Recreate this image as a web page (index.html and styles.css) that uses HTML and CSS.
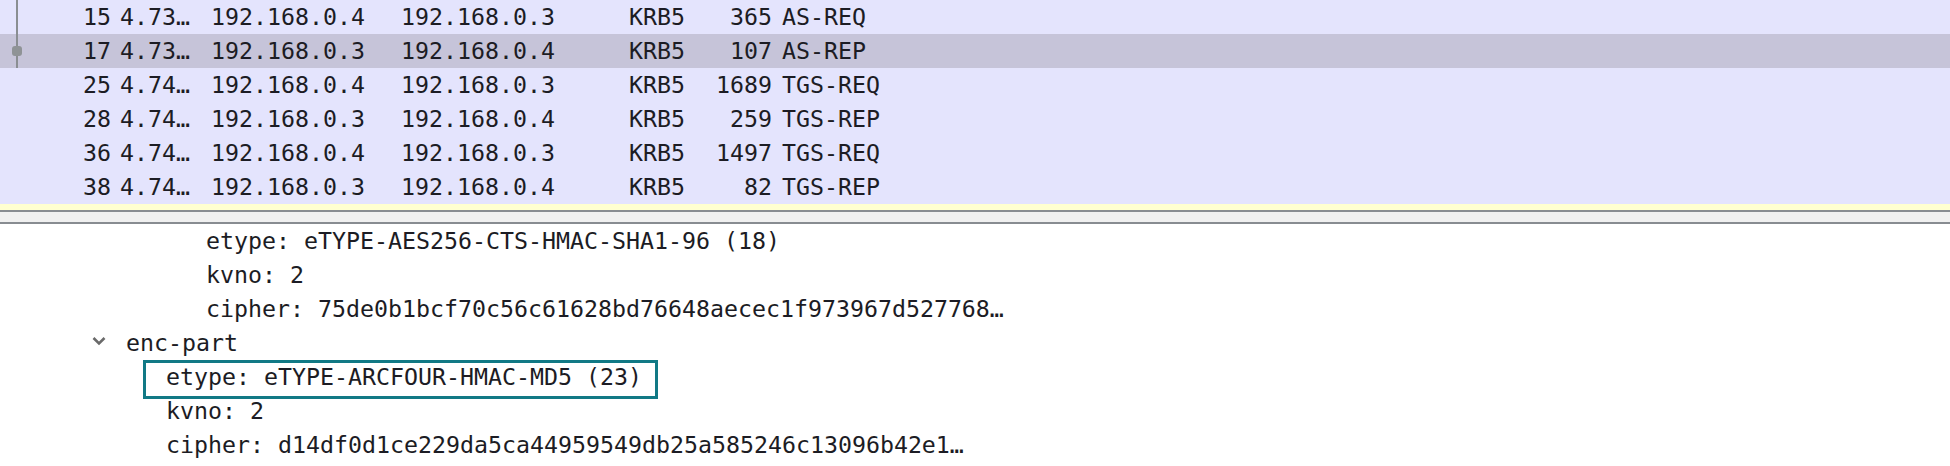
FILE: index.html
```html
<!DOCTYPE html>
<html>
<head>
<meta charset="utf-8">
<link rel="stylesheet" href="styles.css">
</head>
<body>
<div class="app">
  <div class="packet-list">
    <svg class="related" width="24" height="68" viewBox="0 0 24 68"><rect x="16" y="0" width="2" height="68" fill="#8a8e92"/><rect x="12" y="46" width="10" height="10" rx="3" fill="#8f9396"/></svg>
    <div class="row"><span class="c-no">15</span><span class="c-time">4.73…</span><span class="c-src">192.168.0.4</span><span class="c-dst">192.168.0.3</span><span class="c-proto">KRB5</span><span class="c-len">365</span><span class="c-info">AS-REQ</span></div>
    <div class="row selected"><span class="c-no">17</span><span class="c-time">4.73…</span><span class="c-src">192.168.0.3</span><span class="c-dst">192.168.0.4</span><span class="c-proto">KRB5</span><span class="c-len">107</span><span class="c-info">AS-REP</span></div>
    <div class="row"><span class="c-no">25</span><span class="c-time">4.74…</span><span class="c-src">192.168.0.4</span><span class="c-dst">192.168.0.3</span><span class="c-proto">KRB5</span><span class="c-len">1689</span><span class="c-info">TGS-REQ</span></div>
    <div class="row"><span class="c-no">28</span><span class="c-time">4.74…</span><span class="c-src">192.168.0.3</span><span class="c-dst">192.168.0.4</span><span class="c-proto">KRB5</span><span class="c-len">259</span><span class="c-info">TGS-REP</span></div>
    <div class="row"><span class="c-no">36</span><span class="c-time">4.74…</span><span class="c-src">192.168.0.4</span><span class="c-dst">192.168.0.3</span><span class="c-proto">KRB5</span><span class="c-len">1497</span><span class="c-info">TGS-REQ</span></div>
    <div class="row"><span class="c-no">38</span><span class="c-time">4.74…</span><span class="c-src">192.168.0.3</span><span class="c-dst">192.168.0.4</span><span class="c-proto">KRB5</span><span class="c-len">82</span><span class="c-info">TGS-REP</span></div>
    <div class="row-partial"></div>
  </div>
  <div class="splitter"></div>
  <div class="details">
    <div class="line lvl3">etype: eTYPE-AES256-CTS-HMAC-SHA1-96 (18)</div>
    <div class="line lvl3">kvno: 2</div>
    <div class="line lvl3">cipher: 75de0b1bcf70c56c61628bd76648aecec1f973967d527768…</div>
    <div class="line lvl1"><svg class="chev" width="16" height="12" viewBox="0 0 16 12"><path d="M2.5 3 L8 8.5 L13.5 3" fill="none" stroke="#6a6a6a" stroke-width="2.6"/></svg><span>enc-part</span></div>
    <div class="line lvl2 boxed"><span>etype: eTYPE-ARCFOUR-HMAC-MD5 (23)</span></div>
    <div class="line lvl2">kvno: 2</div>
    <div class="line lvl2">cipher: d14df0d1ce229da5ca44959549db25a585246c13096b42e1…</div>
  </div>
</div>
</body>
</html>
```
FILE: styles.css
```css
html, body {
  margin: 0;
  padding: 0;
  background: #ffffff;
}

.app {
  width: 1950px;
  font-family: "DejaVu Sans Mono", "Liberation Mono", monospace;
  font-size: 23.25px;
  color: #1c1c24;
}

.packet-list {
  position: relative;
  background: #e4e4fd;
}

.related {
  position: absolute;
  left: 0;
  top: 0;
}

.row {
  display: grid;
  grid-template-columns: 111px 100px 190px 228px 73px 70px 1fr;
  height: 34px;
  line-height: 34px;
  white-space: pre;
}

.row.selected {
  background: #c6c4d9;
}

.c-no {
  text-align: right;
}

.c-time {
  padding-left: 9px;
}

.c-len {
  text-align: right;
}

.c-info {
  padding-left: 10px;
}

.row-partial {
  height: 6px;
  background: #ffffd0;
}

.splitter {
  height: 10px;
  background: #f0f0f0;
  border-top: 2px solid #888c91;
  border-bottom: 2px solid #888c91;
}

.details {
  background: #ffffff;
}

.line {
  position: relative;
  height: 34px;
  line-height: 34px;
  white-space: pre;
  display: flex;
  align-items: center;
}

.lvl3 {
  padding-left: 206px;
}

.lvl2 {
  padding-left: 166px;
}

.lvl1 {
  padding-left: 91px;
}

.chev {
  margin-right: 19px;
  margin-top: -5px;
  flex: none;
}

.boxed::before {
  content: "";
  position: absolute;
  left: 143px;
  width: 515px;
  top: 0;
  height: 39px;
  box-sizing: border-box;
  border: 3px solid #117985;
}
```
